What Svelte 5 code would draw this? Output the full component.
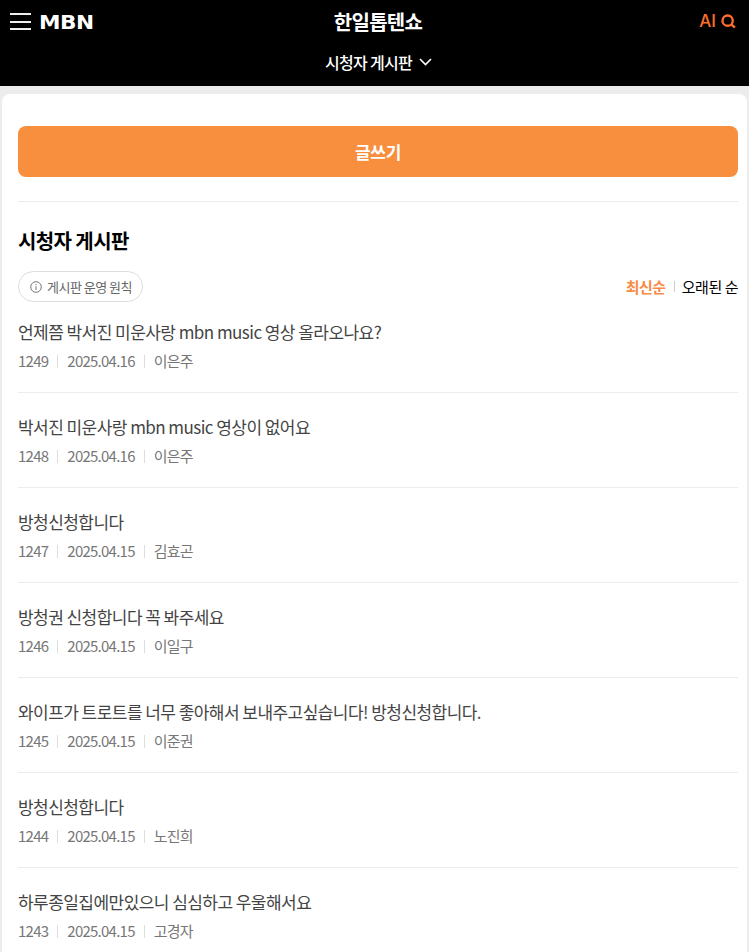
<script lang="ts">
	const posts = [
		{ no: 1249, title: '언제쯤 박서진 미운사랑 mbn music 영상 올라오나요?', date: '2025.04.16', author: '이은주' },
		{ no: 1248, title: '박서진 미운사랑 mbn music 영상이 없어요', date: '2025.04.16', author: '이은주' },
		{ no: 1247, title: '방청신청합니다', date: '2025.04.15', author: '김효곤' },
		{ no: 1246, title: '방청권 신청합니다 꼭 봐주세요', date: '2025.04.15', author: '이일구' },
		{ no: 1245, title: '와이프가 트로트를 너무 좋아해서 보내주고싶습니다! 방청신청합니다.', date: '2025.04.15', author: '이준권' },
		{ no: 1244, title: '방청신청합니다', date: '2025.04.15', author: '노진희' },
		{ no: 1243, title: '하루종일집에만있으니 심심하고 우울해서요', date: '2025.04.15', author: '고경자' }
	];
</script>

<header class="top">
	<div class="bar">
		<div class="left">
			<button class="menu" aria-label="메뉴"><span></span><span></span><span></span></button>
			<span class="logo">MBN</span>
		</div>
		<h1>한일톱텐쇼</h1>
		<div class="right">
			<span class="ai">AI</span>
			<svg width="15" height="15" viewBox="0 0 14 14" fill="none" stroke="#ff6e2b" stroke-width="2.2" aria-hidden="true">
				<circle cx="6.200" cy="6.200" r="4.800" />
				<path d="M9.600 9.600 13 12.800" />
			</svg>
		</div>
	</div>
	<div class="sub">
		<span>시청자 게시판</span>
		<svg width="13" height="8" viewBox="0 0 13 8" fill="none" stroke="#fff" stroke-width="1.6" aria-hidden="true">
			<path d="M1 1l5.500 5.500L12 1" />
		</svg>
	</div>
</header>

<main class="card">
	<button class="write">글쓰기</button>
	<h2>시청자 게시판</h2>
	<div class="tools">
		<button class="rules">
			<svg width="12" height="12" viewBox="0 0 12 12" fill="none" stroke="#777" aria-hidden="true">
				<circle cx="6" cy="6" r="5.300" />
				<path d="M6 5.200V9M6 3v1.200" />
			</svg>
			게시판 운영 원칙
		</button>
		<div class="sort">
			<span class="on">최신순</span>
			<i></i>
			<span>오래된 순</span>
		</div>
	</div>
	<ul>
		{#each posts as post}
			<li>
				<p class="title">{post.title}</p>
				<p class="meta">
					<span>{post.no}</span><i></i><span>{post.date}</span><i></i><span>{post.author}</span>
				</p>
			</li>
		{/each}
	</ul>
</main>

<style>
	:global(html) {
		overflow: hidden;
	}

	:global(body) {
		background: #ececec;
		font-family: 'Noto Sans CJK KR', 'Noto Sans', sans-serif;
		height: 952px;
		overflow: hidden;
	}

	.top {
		background: #000;
		color: #fff;
		height: 86px;
	}

	.bar {
		display: grid;
		grid-template-columns: 1fr auto 1fr;
		align-items: center;
		height: 43px;
		padding: 0 13px 0 10px;
	}

	.left {
		display: flex;
		align-items: center;
		gap: 8px;
	}

	.menu {
		display: flex;
		flex-direction: column;
		justify-content: space-between;
		width: 21px;
		height: 17px;
		padding: 0;
		border: 0;
		background: none;
	}

	.menu span {
		height: 2px;
		background: #eee;
	}

	.logo {
		font-family: 'DejaVu Sans', sans-serif;
		font-weight: 700;
		font-size: 20px;
		line-height: 1;
		letter-spacing: -0.5px;
		transform: scaleX(1.08);
		transform-origin: left;
	}

	h1 {
		margin: 0 0 0 10px;
		font-size: 20px;
		font-weight: 700;
		letter-spacing: -0.7px;
	}

	.right {
		display: flex;
		justify-content: flex-end;
		align-items: center;
		gap: 5px;
		padding-bottom: 1px;
	}

	.ai {
		color: #ff6e2b;
		font-family: 'Inter', sans-serif;
		font-size: 17px;
		font-weight: 500;
		line-height: 1;
	}

	.sub {
		display: flex;
		justify-content: center;
		align-items: center;
		gap: 7px;
		padding: 2px 0 0 8px;
		font-size: 16px;
		font-weight: 500;
		line-height: 34px;
		letter-spacing: -0.7px;
	}

	.card {
		box-sizing: border-box;
		width: 745px;
		height: 900px;
		margin: 8px 0 0 2px;
		padding: 32px 9px 0 16px;
		border-radius: 8px 8px 0 0;
		background: #fff;
	}

	.write {
		display: block;
		width: 100%;
		height: 51px;
		border: 0;
		border-radius: 8px;
		background: #f88f3f;
		color: #fff;
		font-family: inherit;
		font-size: 17px;
		font-weight: 700;
		letter-spacing: -0.3px;
	}

	h2 {
		margin: 24px 0 0;
		padding-top: 23px;
		border-top: 1px solid #ececec;
		font-size: 20px;
		font-weight: 700;
		line-height: 32px;
		letter-spacing: -0.6px;
		color: #000;
	}

	.tools {
		display: flex;
		justify-content: space-between;
		align-items: center;
		margin-top: 14px;
	}

	.rules {
		display: flex;
		align-items: center;
		gap: 5px;
		height: 31px;
		padding: 0 10px 0 11px;
		border: 1px solid #ddd;
		border-radius: 16px;
		background: #fff;
		color: #666;
		font-family: inherit;
		font-size: 13px;
		letter-spacing: -0.5px;
	}

	.sort {
		display: flex;
		align-items: center;
		gap: 7px;
		font-size: 15px;
		letter-spacing: -0.45px;
		color: #000;
	}

	.sort .on {
		margin-right: 1px;
		color: #fa8a45;
		font-weight: 700;
	}

	.sort i {
		width: 1px;
		height: 11px;
		background: #ccc;
	}

	ul {
		margin: 0;
		padding: 0;
		list-style: none;
	}

	li {
		height: 95px;
		box-sizing: border-box;
		padding-top: 21px;
		border-bottom: 1px solid #ececec;
	}

	li:first-child {
		height: 91px;
		padding-top: 17px;
	}

	.title {
		margin: 0;
		font-size: 17px;
		line-height: 26px;
		letter-spacing: -0.55px;
		color: #444;
	}

	.meta {
		display: flex;
		align-items: center;
		gap: 9px;
		margin: 6px 0 0;
		font-size: 15px;
		line-height: 20px;
		letter-spacing: -0.75px;
		color: #777;
	}

	.meta i {
		width: 1px;
		height: 13px;
		background: #ddd;
	}
</style>
